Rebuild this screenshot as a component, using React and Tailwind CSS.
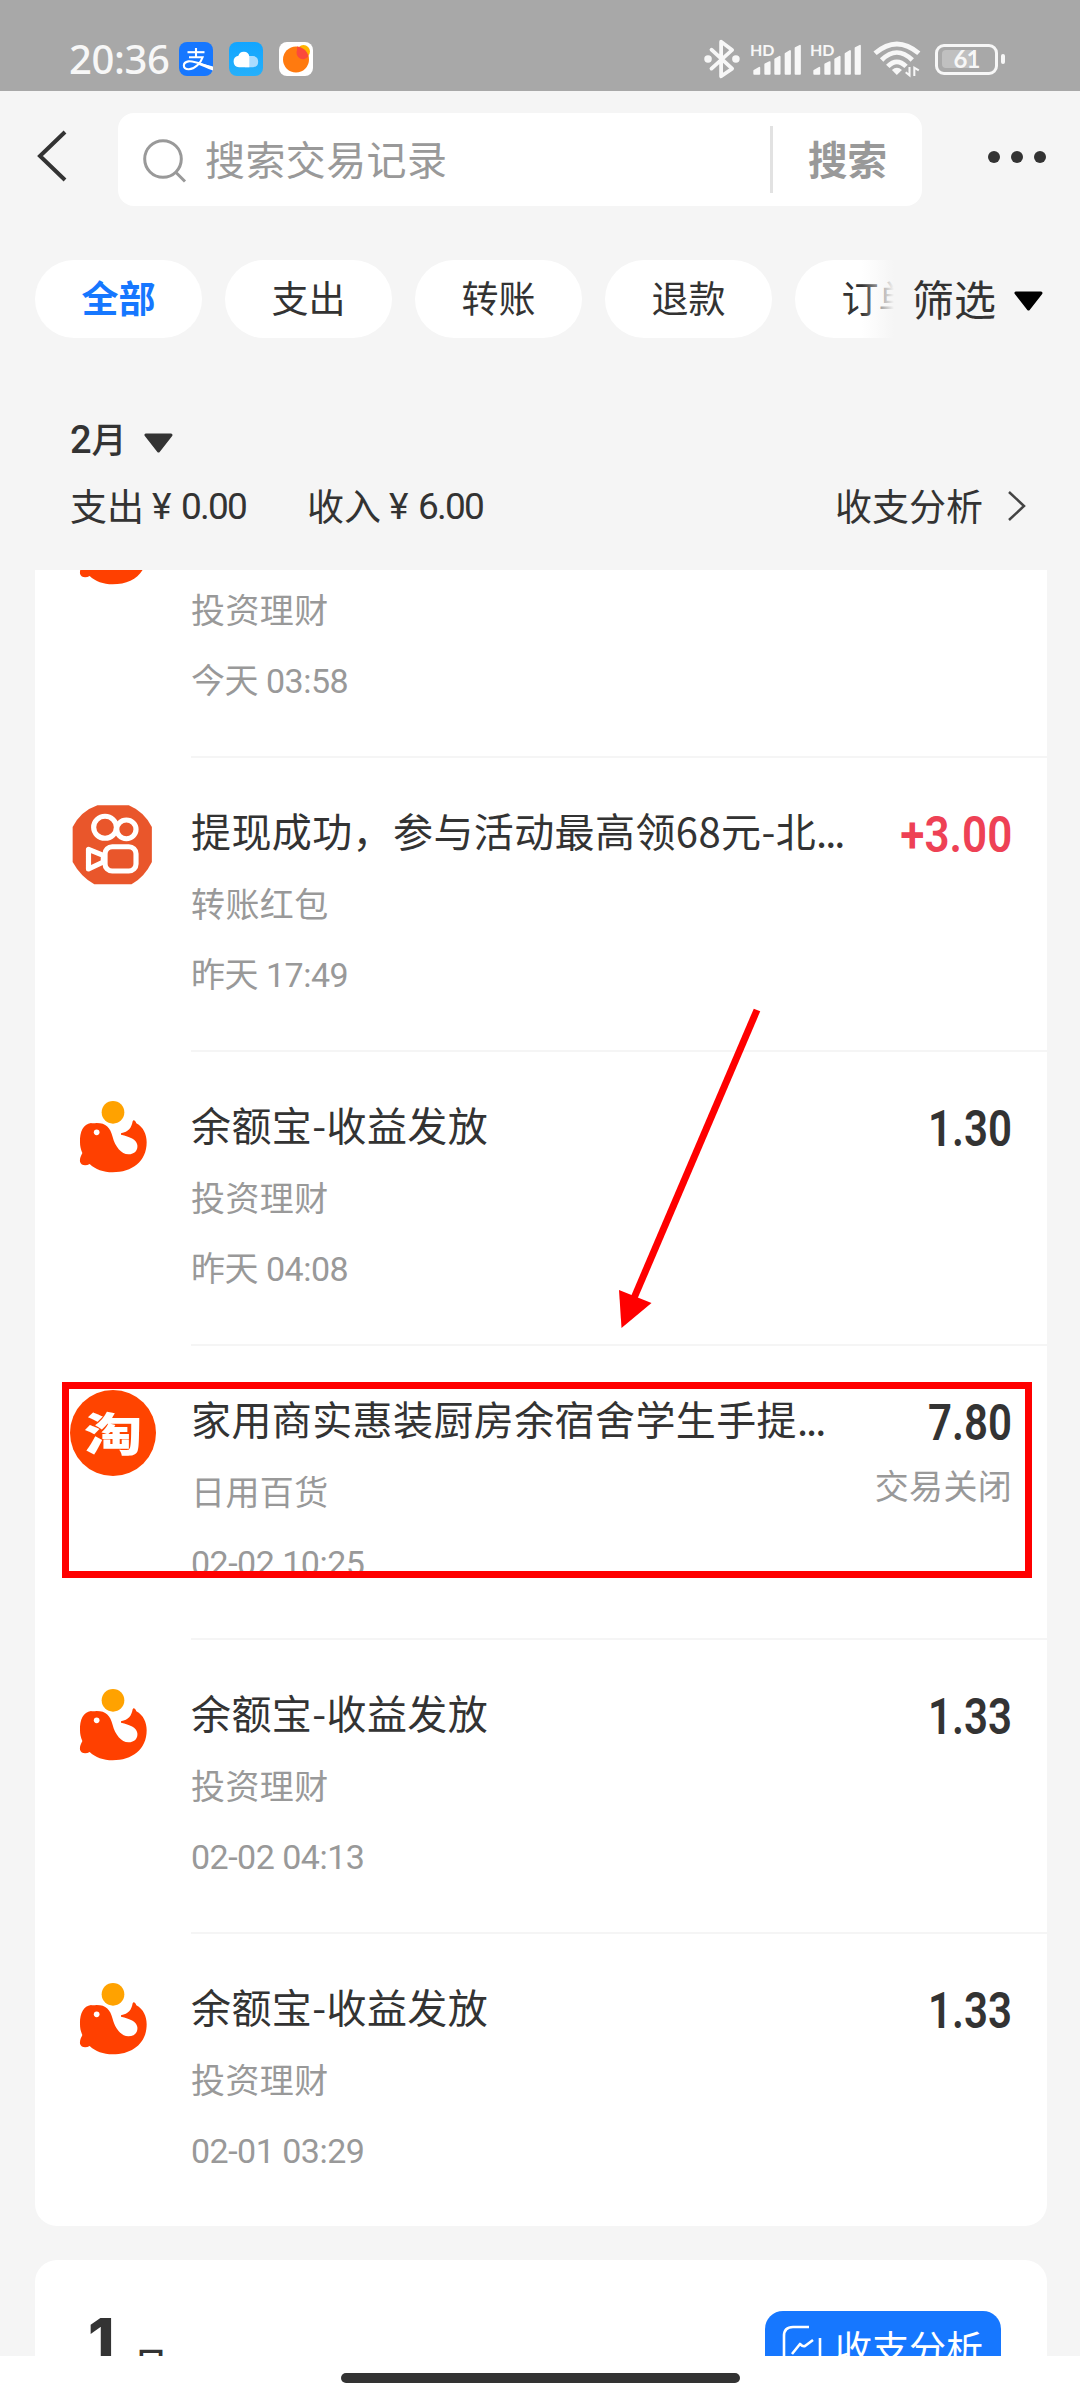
import React from "react";

function AlipayIcon() {
  return (
    <svg className="h-[34px] w-[34px]" viewBox="0 0 34 34">
      <rect width="34" height="34" rx="8" fill="#1677ff" />
      <g fill="none" stroke="#fff" strokeWidth="2.1">
        <path d="M8.5 10.2H25.5" />
        <path d="M17 6V15" />
        <path d="M10 15.2H23.6C22 20.5 16 27.5 9.5 27.3C3.5 27 3.2 20.6 9.3 19.4C15 18.4 22 22.3 34 26.3" />
      </g>
      <path d="M20 20.8L34 24.6V28.6C28 26.2 23 23.8 18.6 22.4Z" fill="#fff" />
    </svg>
  );
}

function CloudIcon() {
  return (
    <svg className="h-[34px] w-[34px]" viewBox="0 0 34 34">
      <defs>
        <linearGradient id="sky" x1="0" y1="0" x2="0" y2="1">
          <stop offset="0" stopColor="#12a5ff" />
          <stop offset="1" stopColor="#25b0fb" />
        </linearGradient>
      </defs>
      <rect width="34" height="34" rx="8" fill="url(#sky)" />
      <path d="M20 14h4.2a5.7 5.7 0 0 1 0 11.3H16Z" fill="#a9dcff" />
      <path d="M10 25.3a5.8 5.8 0 0 1-.6-11.5a5.6 5.6 0 0 1 10.9.4V25.3Z" fill="#fff" />
    </svg>
  );
}

function SunIcon() {
  return (
    <svg className="h-[34px] w-[34px]" viewBox="0 0 34 34">
      <rect width="34" height="34" rx="8" fill="#fff" />
      <circle cx="24.5" cy="9.5" r="6.5" fill="#ffb400" />
      <circle cx="17" cy="17.5" r="13" fill="#ff7a0f" />
      <path d="M18 8A6.5 6.500 0 0 0 29.500 14A13 13 0 0 0 18 4.600Z" fill="#fb4a3c" />
    </svg>
  );
}

function BluetoothIcon() {
  return (
    <svg className="h-[42px] w-[38px]" viewBox="473.4 114 110.4 126" preserveAspectRatio="none">
      <path d="M498 149L558 206L526 229V125L558 150L498 206" fill="none" stroke="#f7f7f7" strokeWidth="11" strokeLinejoin="round" strokeLinecap="round" />
      <circle cx="488" cy="177" r="11" fill="#f7f7f7" />
      <circle cx="569" cy="177" r="11" fill="#f7f7f7" />
    </svg>
  );
}

function SignalIcon() {
  return (
    <div className="relative h-[36px] w-[52px]">
      <svg className="h-[36px] w-[52px]" viewBox="609.8 123 151 108" preserveAspectRatio="none">
        <g fill="#f7f7f7" stroke="#f7f7f7" strokeWidth="5" strokeLinejoin="round">
          <path d="M622 212L637 203V222H622Z" />
          <path d="M654 193L667 186V222H654Z" />
          <path d="M683 178L696 170V222H683Z" />
          <path d="M713 161L726 153V222H713Z" />
          <path d="M742 144L755 137V222H742Z" />
        </g>
      </svg>
      <span className="absolute left-0 -top-px font-['Lato'] text-[16px] font-bold leading-[20px] text-[#f7f7f7]">HD</span>
    </div>
  );
}

function WifiIcon() {
  return (
    <svg className="h-[38px] w-[48px]" viewBox="967 123 139.4 114" preserveAspectRatio="none">
      <g fill="none" stroke="#f7f7f7" strokeWidth="14">
        <path d="M973 163Q1036 107 1100 163" />
        <path d="M992 183Q1036 138 1081 183" />
        <path d="M1010 202Q1036 175 1063 202" />
      </g>
      <path d="M1022 213Q1036 200 1051 213L1036 228Z" fill="#f7f7f7" />
      <path d="M1062 220L1073 229V204M1100 214L1087 206V231" fill="none" stroke="#f7f7f7" strokeWidth="6" />
    </svg>
  );
}

function Battery() {
  return (
    <div className="flex items-center gap-[3px]">
      <div className="relative flex h-[31px] w-[63px] items-center rounded-[9px] border-[3px] border-[#f7f7f7] px-1">
        <div className="h-[18px] w-[30px] rounded-l-[4px] bg-[#c0c0c0]" />
        <span className="absolute inset-0 flex items-center justify-center font-['Lato'] text-[24px] font-bold leading-none tracking-[-1px] text-[#f7f7f7]">61</span>
      </div>
      <div className="h-[10px] w-[4px] rounded-full bg-[#f7f7f7]" />
    </div>
  );
}

function StatusBar() {
  return (
    <header className="flex h-[91px] items-start bg-[#a8a8a8] pl-[69px] pr-[75px]">
      <span className="mt-[31px] w-[110px] whitespace-nowrap font-['Noto_Sans'] text-[40px] font-medium leading-[56px] tracking-[-0.4px] text-[#f7f7f7]">20:36</span>
      <div className="mt-[42px] flex gap-4">
        <AlipayIcon />
        <CloudIcon />
        <SunIcon />
      </div>
      <div className="ml-auto mt-[38px] flex h-[42px] items-center">
        <BluetoothIcon />
        <div className="ml-[9px] flex gap-2">
          <SignalIcon />
          <SignalIcon />
        </div>
        <div className="ml-[11px] mr-[14px] flex">
          <WifiIcon />
        </div>
        <Battery />
      </div>
    </header>
  );
}

function SearchBar() {
  return (
    <div className="flex h-[115px] items-end pl-[35px] pr-[34px]">
      <svg className="mb-[24px] h-[52px] w-[34px]" viewBox="0 0 34 52" fill="none" stroke="#333" strokeWidth="4">
        <path d="M30 2L5 26L30 50" />
      </svg>
      <div className="ml-[49px] flex h-[93px] w-[804px] items-center rounded-[16px] bg-white pl-[24px]">
        <svg className="h-[46px] w-[46px]" viewBox="0 0 46 46" fill="none" stroke="#999" strokeWidth="3">
          <circle cx="21" cy="22" r="18.3" />
          <path d="M33.5 35L43 44.5" />
        </svg>
        <span className="-mt-[3px] ml-[17px] text-[40px] leading-[56px] tracking-[0.4px] text-[#999]">搜索交易记录</span>
        <div className="ml-auto h-[67px] w-[3px] bg-[#e2e2e2]" />
        <span className="-mt-[3px] w-[149px] pl-[35px] text-[39.5px] font-bold leading-[56px] text-[#999]">搜索</span>
      </div>
      <div className="mb-[43px] ml-auto flex gap-[11px]">
        <i className="h-[12px] w-[12px] rounded-full bg-[#333]" />
        <i className="h-[12px] w-[12px] rounded-full bg-[#333]" />
        <i className="h-[12px] w-[12px] rounded-full bg-[#333]" />
      </div>
    </div>
  );
}

const chips = ["全部", "支出", "转账", "退款", "订单"];

function Triangle({ color }) {
  return (
    <svg className="h-[20px] w-[29px]" viewBox="0 0 29 20">
      <path d="M2 2H27L14.5 18Z" fill={color} stroke={color} strokeWidth="3" strokeLinejoin="round" />
    </svg>
  );
}

function FilterRow() {
  return (
    <nav className="mt-[54px] flex h-[78px] items-center pl-[35px]">
      <div className="relative flex w-[859px] gap-[23px] overflow-hidden">
        {chips.map((chip, i) => (
          <span
            key={chip}
            className={
              i === 0
                ? "flex h-[78px] w-[167px] shrink-0 items-center justify-center rounded-full bg-white pb-[2px] text-[37px] font-bold text-[#1677ff]"
                : "flex h-[78px] w-[167px] shrink-0 items-center justify-center rounded-full bg-white pb-[2px] text-[37px] text-[#333]"
            }
          >
            {chip}
          </span>
        ))}
        <div className="absolute right-0 top-0 h-full w-[32px] bg-linear-to-r from-[#f5f5f5]/0 to-[#f5f5f5]" />
      </div>
      <span className="-mt-[3px] ml-[18px] text-[42px] leading-[60px] text-[#333]">筛选</span>
      <div className="ml-[18px] flex pt-[4px]">
        <Triangle color="#000" />
      </div>
    </nav>
  );
}

function Money({ label, value }) {
  return (
    <div className="flex items-center whitespace-nowrap">
      <span>{label}</span>
      <span className="ml-[8px] w-[29px] pt-[4px] font-['Roboto'] tracking-[-1px]">¥</span>
      <span className="pt-[4px] font-['Roboto'] tracking-[-1.8px]">{value}</span>
    </div>
  );
}

function MonthSummary() {
  return (
    <section className="h-[232px] pl-[70px] pr-[54px] pt-[77px]">
      <div className="flex h-[52px] items-center">
        <span className="font-['Roboto','Noto_Sans_CJK_SC',sans-serif] text-[38px] font-medium leading-[52px] text-[#333]">
          2<span className="text-[35px]">月</span>
        </span>
        <div className="ml-[17px] flex pt-[4px]">
          <Triangle color="#333" />
        </div>
      </div>
      <div className="mt-[12px] flex h-[52px] items-center text-[37px] leading-[52px] text-[#333]">
        <div className="w-[237px]">
          <Money label="支出" value="0.00" />
        </div>
        <Money label="收入" value="6.00" />
        <span className="ml-auto">收支分析</span>
        <svg className="ml-[25px] mt-[2px] h-[32px] w-[18px]" viewBox="0 0 18 32" fill="none" stroke="#444" strokeWidth="2.5">
          <path d="M1 2L16 16L1 30" />
        </svg>
      </div>
    </section>
  );
}

function YuebaoIcon() {
  return (
    <svg className="h-[86px] w-[86px]" viewBox="12 11 258 258">
      <circle cx="141" cy="60" r="34" fill="#ffa200" />
      <path
        fill="#ff4000"
        d="M42 150C41 118 52 95 75 92C80 94 86 92 92 92C120 92 133 106 140 134C147 162 166 186 187 186C206 186 216 174 214 158C211 140 192 134 165 127V123C188 118 196 108 200 87C202 81 208 84 211 93C232 104 242 126 242 150C242 208 198 240 140 240C112 240 88 231 71 215C60 221 45 220 42 208C41 195 46 190 49 182C44 170 42 162 42 150Z"
      />
      <circle cx="92" cy="120" r="8.5" fill="#fff" />
    </svg>
  );
}

function KuaishouIcon() {
  return (
    <svg className="h-[86px] w-[86px]" viewBox="203.3 725 249.7 258" preserveAspectRatio="none">
      <path fill="#e9562b" d="M283 735H374Q418 754 441 800V905Q420 950 382 972H274Q235 950 211 905V800Q235 752 283 735Z" />
      <g fill="none" stroke="#fff" strokeWidth="15" strokeLinejoin="round">
        <circle cx="305" cy="801" r="33" />
        <circle cx="367" cy="807" r="28" />
        <rect x="305" y="859" width="90" height="73" rx="21" />
        <path d="M257 867V926L300 905V885Z" />
      </g>
    </svg>
  );
}

function TaobaoIcon() {
  return (
    <div className="flex h-[86px] w-[86px] items-center justify-center rounded-full bg-[#ff4400]">
      <span className="-mt-[2px] scale-x-112 scale-y-88 text-[52px] font-black leading-[60px] text-white">淘</span>
    </div>
  );
}

const icons = { yuebao: YuebaoIcon, kuaishou: KuaishouIcon, taobao: TaobaoIcon };

const records = [
  { icon: "yuebao", title: "", category: "投资理财", time: "今天 03:58", amount: "" },
  { icon: "kuaishou", title: "提现成功，参与活动最高领68元-北", more: true, category: "转账红包", time: "昨天 17:49", amount: "+3.00", income: true },
  { icon: "yuebao", title: "余额宝-收益发放", category: "投资理财", time: "昨天 04:08", amount: "1.30" },
  { icon: "taobao", title: "家用商实惠装厨房余宿舍学生手提", more: true, category: "日用百货", time: "02-02 10:25", amount: "7.80", status: "交易关闭" },
  { icon: "yuebao", title: "余额宝-收益发放", category: "投资理财", time: "02-02 04:13", amount: "1.33" },
  { icon: "yuebao", title: "余额宝-收益发放", category: "投资理财", time: "02-01 03:29", amount: "1.33" },
];

function Record({ item, last }) {
  const Icon = icons[item.icon];
  return (
    <li className={last ? "flex h-[292px] pl-[35px]" : "flex h-[294px] pl-[35px]"}>
      <div className="w-[121px] shrink-0 pt-[44px]">
        <Icon />
      </div>
      <div className={last ? "flex flex-1 pr-[35px] pt-[44px]" : "flex flex-1 border-b-2 border-[#f5f5f5] pr-[35px] pt-[44px]"}>
        <div className="flex-1 whitespace-nowrap">
          <p className="h-[56px] text-[40px] leading-[56px] tracking-[0.4px] text-[#333]">
            {item.title}
            {item.more && <span className="tracking-[-2px]">...</span>}
          </p>
          <p className="mt-[21px] text-[34px] leading-[48px] tracking-[0.4px] text-[#999]">{item.category}</p>
          <p className="mt-[24px] font-['Roboto','Noto_Sans_CJK_SC',sans-serif] text-[34px] leading-[48px] tracking-[-0.5px] text-[#999]">{item.time}</p>
        </div>
        <div className="flex flex-col items-end whitespace-nowrap">
          <span
            className={
              item.income
                ? "h-[60px] origin-right scale-x-88 font-['Roboto'] text-[50px] font-semibold leading-[66px] text-[#ee4155]"
                : "h-[60px] origin-right scale-x-84 font-['Roboto'] text-[50px] font-semibold leading-[66px] text-[#333]"
            }
          >
            {item.amount}
          </span>
          {item.status && <span className="mt-[11px] text-[34px] leading-[48px] tracking-[0.3px] text-[#999]">{item.status}</span>}
        </div>
      </div>
    </li>
  );
}

function NextMonthCard() {
  return (
    <section className="mt-[34px] flex h-[200px] justify-between rounded-[22px] bg-white pl-[53px] pr-[46px] pt-[51px] text-[#333]">
      <div className="flex items-start">
        <span className="pt-[0px] font-['Inter'] text-[60px] font-extrabold leading-[58px]">1</span>
        <span className="ml-[18px] mt-[26px] text-[36px] font-medium leading-[52px]">月</span>
      </div>
      <div className="flex h-[78px] w-[236px] items-start rounded-[18px] bg-[#1677ff] pl-[16px] pt-[10px] text-white">
        <svg className="mt-[3px] h-[44px] w-[42px]" viewBox="0 0 42 44" fill="none" stroke="#fff" strokeWidth="2.6">
          <path d="M28 3H12Q3 3 3 12V32Q3 41 12 41H30Q39 41 39 32V14" />
          <path d="M11 30L19 20Q22 23 24 22L32 16" strokeLinejoin="round" />
        </svg>
        <span className="-mt-[2px] ml-[12px] whitespace-nowrap text-[37px] leading-[56px]">收支分析</span>
      </div>
    </section>
  );
}

function Annotation() {
  return (
    <>
      <div className="absolute left-[62px] top-[1382px] h-[196px] w-[970px] border-[7px] border-[#ff0000]" />
      <svg className="absolute left-[610px] top-[1000px] h-[340px] w-[160px]" viewBox="610 1000 160 340">
        <path d="M757 1010L634 1298" stroke="#f00" strokeWidth="7" />
        <path d="M619 1290L651.5 1303L621.5 1328Z" fill="#f00" />
      </svg>
    </>
  );
}

export default function App() {
  return (
    <div className="relative h-[2400px] w-[1080px] overflow-hidden bg-[#f5f5f5] font-['Noto_Sans_CJK_SC',sans-serif]">
      <StatusBar />
      <SearchBar />
      <FilterRow />
      <MonthSummary />
      <main className="h-[1786px] overflow-hidden pl-[35px] pr-[33px]">
        <ul className="-mt-[106px] rounded-b-[22px] bg-white">
          {records.map((item, i) => (
            <Record key={i} item={item} last={i === records.length - 1} />
          ))}
        </ul>
        <NextMonthCard />
      </main>
      <footer className="flex h-[44px] justify-center bg-white pt-[17px]">
        <div className="h-[10px] w-[399px] rounded-full bg-[#333]" />
      </footer>
      <Annotation />
    </div>
  );
}
